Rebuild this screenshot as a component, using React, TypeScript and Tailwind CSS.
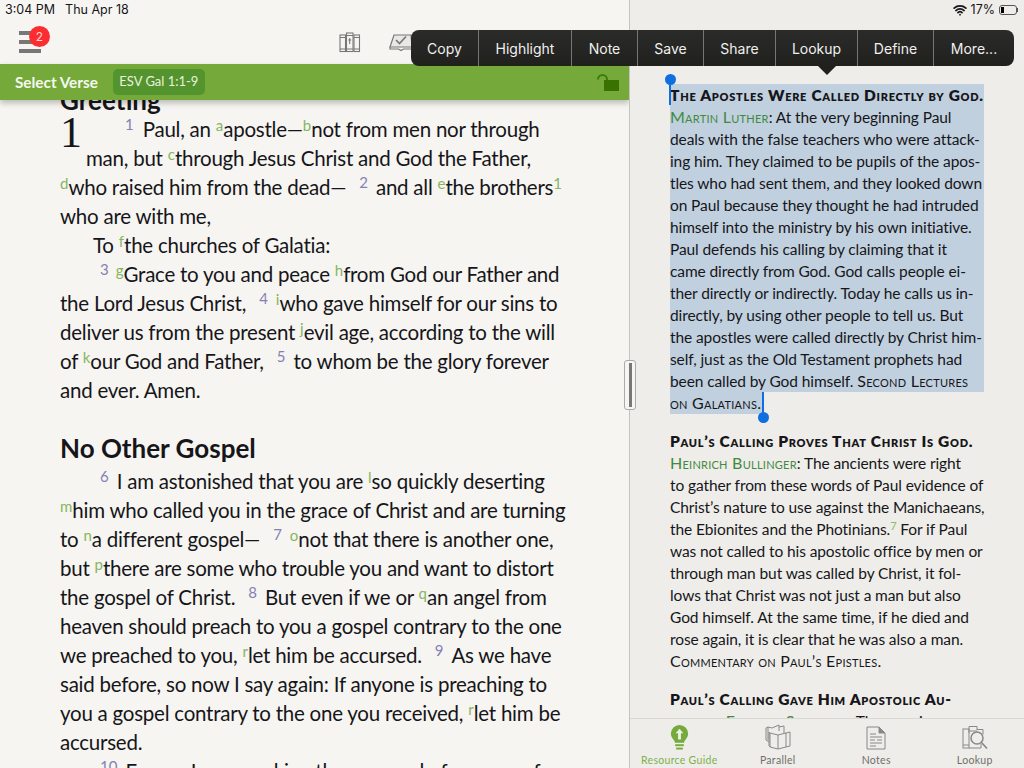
import type { ReactNode } from 'react';
import { Wifi } from 'lucide-react';

const BODY = '[font-family:Lato,sans-serif]';
const UI = '[font-family:Inter,sans-serif]';
const SC = 'text-[16px] tracking-[0.25px] [font-variant:small-caps]';

function V({ n, className = 'ml-[13px] mr-[8px]' }: { n: string; className?: string }) {
  return <span className={`text-[15px] tracking-normal leading-none align-[7px] text-[#8481b5] ${className}`}>{n}</span>;
}

function F({ c }: { c: string }) {
  return <span className="text-[15px] tracking-normal leading-none align-[6px] text-[#86b562]">{c}</span>;
}

function L({ children, className = '' }: { children: ReactNode; className?: string }) {
  return <div className={`whitespace-nowrap ${className}`}>{children}</div>;
}

function Hamburger() {
  return (
    <div className="relative w-[22px] flex flex-col gap-[5px]">
      <div className="h-[4px] bg-[#777]" />
      <div className="h-[4px] bg-[#777]" />
      <div className="h-[4px] bg-[#777]" />
      <div className={`absolute -top-[5px] left-[10px] w-[21px] h-[21px] rounded-full bg-[#fb2d30] text-[#ffd9d9] text-[12px] flex items-center justify-center ${UI}`}>2</div>
    </div>
  );
}

function LibraryIcon() {
  return (
    <svg width="22" height="21" viewBox="0 0 22 21" fill="none" stroke="#777" strokeWidth="1.100">
      <rect x="1" y="3" width="5.500" height="16.500" />
      <rect x="7.500" y="1" width="6.500" height="18.500" />
      <rect x="15" y="3" width="5.500" height="16.500" />
      <path d="M10.700 6v6M9.200 8h3M1 17h5.500M7.500 17h6.500M15 17h5.500M1 5.500h5.500M7.500 3.500h6.500M15 5.500h5.500" />
    </svg>
  );
}

function BookCheckIcon() {
  return (
    <svg width="24" height="20" viewBox="0 0 24 20" fill="#e9e8e4" stroke="#777" strokeWidth="1.200">
      <path d="M5 3h17l1 12H1z" />
      <path d="M1 15v2h8.500l2.500 1.500 2.500-1.500H23v-2" fill="none" />
      <path d="M7 8l3.500 3.500L17 4.500" fill="none" strokeWidth="1.700" />
    </svg>
  );
}

function LockIcon() {
  return (
    <svg width="24" height="19" viewBox="0 0 24 19" fill="none">
      <path d="M2 6.500a4.500 4.500 0 0 1 9 0V8" stroke="#3d7a10" strokeWidth="2" />
      <rect x="8" y="7" width="15" height="11" fill="#3a7200" />
    </svg>
  );
}

function BulbIcon() {
  return (
    <svg width="19" height="25" viewBox="0 0 19 26">
      <path d="M9.500 0a9 9 0 0 1 9 9c0 3.500-2.400 5.400-3.600 7.500-.4.800-.6 1.500-.6 2H4.700c0-.5-.2-1.200-.6-2C2.900 14.400.5 12.500.5 9a9 9 0 0 1 9-9z" fill="#74ab3c" />
      <path d="M9.500 4l4 4.500h-2.500V15H8V8.500H5.500z" fill="#eeede9" />
      <rect x="5" y="20" width="9" height="2" fill="#74ab3c" />
      <rect x="6" y="23.500" width="7" height="2" fill="#74ab3c" />
    </svg>
  );
}

function ParallelIcon() {
  return (
    <svg width="26" height="26" viewBox="0 0 26 26" fill="none" stroke="#888" strokeWidth="1">
      <path d="M3 16V3l4 1 7-3v6M3 3L1 4v12l3 2" />
      <path d="M14 3l5-1v7" />
      <path d="M5 9l8 2 8-2 4-1v14l-4 1-8 2-8-2-1-1V8z" />
      <path d="M13 11v14M5 9v14M21 9v14" />
    </svg>
  );
}

function NotesIcon() {
  return (
    <svg width="20" height="24" viewBox="0 0 20 24" fill="none" stroke="#888" strokeWidth="1">
      <path d="M1 1h12l6 6v16H1z" />
      <path d="M13 1l6 6h-6z" fill="#888" />
      <path d="M4 8h6M4 11h12M4 14h5M11 14h5M4 17h12M4 20h6" />
    </svg>
  );
}

function LookupIcon() {
  return (
    <svg width="26" height="25" viewBox="0 0 26 25" fill="none" stroke="#888" strokeWidth="1">
      <rect x="1" y="4" width="6" height="19" />
      <path d="M7 8V1.500h8V5M15 4.500h6v5M7 23h12v-4M1 20h6M7 6h8" />
      <circle cx="15" cy="13" r="6" strokeWidth="1.500" />
      <path d="M19.500 17.500L25 23.500" strokeWidth="1.700" />
    </svg>
  );
}

const MENU: [string, string][] = [
  ['Copy', 'w-[68px]'],
  ['Highlight', 'w-[93px]'],
  ['Note', 'w-[66px]'],
  ['Save', 'w-[66px]'],
  ['Share', 'w-[72px]'],
  ['Lookup', 'w-[82px]'],
  ['Define', 'w-[76px]'],
  ['More...', 'w-[80px]'],
];

function ActionMenu() {
  return (
    <div className={`absolute left-[411px] top-[30px] z-30 flex h-[36px] rounded-[8px] bg-gradient-to-b from-[#2b2b2a] to-[#20201d] text-[14px] text-[#f0f0ee] ${UI}`}>
      {MENU.map(([label, w], i) => (
        <div key={label} className={`${w} flex items-center justify-center ${i < MENU.length - 1 ? 'border-r border-[#77776f]' : ''}`}>
          {label}
        </div>
      ))}
      <div className="absolute left-[407px] top-[36px] w-0 h-0 border-x-[9px] border-x-transparent border-t-[9px] border-t-[#20201d]" />
    </div>
  );
}

function Tab({ icon, label, active }: { icon: ReactNode; label: string; active?: boolean }) {
  return (
    <div className="flex flex-col items-center justify-end">
      <div className="h-[28px] flex items-end">{icon}</div>
      <div className={`mt-[3px] mb-[1px] text-[10.5px] leading-[14px] tracking-[0.3px] ${active ? 'text-[#7fb04c]' : 'text-[#6f6f6c]'}`}>{label}</div>
    </div>
  );
}

function Green({ children }: { children: ReactNode }) {
  return <span className="text-[#3f8a3f]">{children}</span>;
}

export default function App() {
  return (
    <div className={`relative w-[1024px] h-[768px] overflow-hidden flex ${BODY} text-[#16161a]`}>
      <ActionMenu />

      {/* selection handles */}
      <div className="absolute left-[665px] top-[74px] z-20 w-[11px] h-[11px] rounded-full bg-[#0f6fe0]" />
      <div className="absolute left-[669px] top-[80px] z-20 w-[2px] h-[25px] bg-[#0f6fe0]" />
      <div className="absolute left-[762px] top-[392px] z-20 w-[2px] h-[24px] bg-[#0f6fe0]" />
      <div className="absolute left-[758px] top-[412px] z-20 w-[11px] h-[11px] rounded-full bg-[#0f6fe0]" />

      {/* divider grip */}
      <div className="absolute left-[624px] top-[360px] z-20 w-[12px] h-[50px] rounded-[3px] border border-[#aaa] bg-[#f6f5f1] flex items-center justify-center">
        <div className="w-[3px] h-[44px] bg-[#777]" />
      </div>

      {/* left pane */}
      <div className="w-[630px] h-full shrink-0 bg-[#f6f5f1] border-r border-[#c4c3bf] flex flex-col overflow-hidden">
        <div className={`h-[20px] shrink-0 flex items-center gap-[10px] pl-[5px] text-[12.5px] ${UI}`}>
          <span>3:04 PM</span>
          <span>Thu Apr 18</span>
        </div>
        <div className="h-[44px] shrink-0 flex items-center pl-[19px]">
          <Hamburger />
          <div className="ml-[298px] flex items-center gap-[28px]">
            <LibraryIcon />
            <BookCheckIcon />
          </div>
        </div>
        <div className="relative z-10 h-[36px] shrink-0 bg-[#75aa3a] shadow-[0_3px_6px_rgba(0,0,0,0.25)] flex items-center pl-[15px] pr-[9px] text-white">
          <span className="text-[15.3px] font-bold text-[#f5f8ef]">Select Verse</span>
          <span className="ml-[15px] h-[26px] w-[92px] rounded-[5px] bg-[#53942f] text-[13px] text-[#eaf2dd] flex items-center justify-center">ESV Gal 1:1-9</span>
          <span className="ml-auto"><LockIcon /></span>
        </div>

        <div className="-mt-[14px] pl-[60px] text-[20.5px] tracking-[-0.24px] leading-[29px]">
          <div className="text-[26px] tracking-normal font-bold">Greeting</div>
          <div className="float-left w-[26px] h-[58px] text-[44px] leading-[36px] [font-family:'Liberation_Serif',serif]">1</div>
          <L className="pl-[65px]"><V n="1" className="mr-[9px]" />Paul, an <F c="a" />apostle—<F c="b" />not from men nor through</L>
          <L>man, but <F c="c" />through Jesus Christ and God the Father,</L>
          <L><F c="d" />who raised him from the dead—<V n="2" />and all <F c="e" />the brothers<F c="1" /></L>
          <L>who are with me,</L>
          <L className="pl-[33px]">To <F c="f" />the churches of Galatia:</L>
          <L className="pl-[40px]"><V n="3" className="mr-[7px]" /><F c="g" />Grace to you and peace <F c="h" />from God our Father and</L>
          <L>the Lord Jesus Christ,<V n="4" /><F c="i" />who gave himself for our sins to</L>
          <L>deliver us from the present <F c="j" />evil age, according to the will</L>
          <L>of <F c="k" />our God and Father,<V n="5" />to whom be the glory forever</L>
          <L>and ever. Amen.</L>
          <div className="mt-[29px] text-[26px] tracking-normal font-bold">No Other Gospel</div>
          <L className="mt-[4px] pl-[40px]"><V n="6" className="mr-[8px]" />I am astonished that you are <F c="l" />so quickly deserting</L>
          <L><F c="m" />him who called you in the grace of Christ and are turning</L>
          <L>to <F c="n" />a different gospel—<V n="7" /><F c="o" />not that there is another one,</L>
          <L>but <F c="p" />there are some who trouble you and want to distort</L>
          <L>the gospel of Christ.<V n="8" />But even if we or <F c="q" />an angel from</L>
          <L>heaven should preach to you a gospel contrary to the one</L>
          <L>we preached to you, <F c="r" />let him be accursed.<V n="9" />As we have</L>
          <L>said before, so now I say again: If anyone is preaching to</L>
          <L>you a gospel contrary to the one you received, <F c="r" />let him be</L>
          <L>accursed.</L>
          <L className="pl-[40px]"><V n="10" className="mr-[8px]" />For am I now seeking the approval of man, or of</L>
        </div>
      </div>

      {/* right pane */}
      <div className="flex-1 min-w-0 h-full bg-[#eeede9] flex flex-col">
        <div className={`h-[20px] shrink-0 flex items-center justify-end gap-[4px] pr-[6px] text-[12.5px] ${UI}`}>
          <Wifi size={14} strokeWidth={3} />
          <span>17%</span>
          <div className="flex items-center">
            <div className="w-[18px] h-[10px] rounded-[3px] border border-[#555] p-px">
              <div className="w-[3px] h-full bg-black" />
            </div>
            <div className="w-px h-[4px] bg-[#555]" />
          </div>
        </div>
        <div className="flex-1 min-h-0 overflow-hidden pt-[64px] pl-[40px] text-[15.5px] tracking-[-0.1px] leading-[22px]">
          <div className="w-[314px] bg-[#c1d0de]">
            <L className="font-extrabold tracking-[0.7px] [font-variant:small-caps]">The Apostles Were Called Directly by God.</L>
            <L><span className={SC}><Green>Martin Luther</Green></span>: At the very beginning Paul</L>
            <L>deals with the false teachers who were attack-</L>
            <L>ing him. They claimed to be pupils of the apos-</L>
            <L>tles who had sent them, and they looked down</L>
            <L>on Paul because they thought he had intruded</L>
            <L>himself into the ministry by his own initiative.</L>
            <L>Paul defends his calling by claiming that it</L>
            <L>came directly from God. God calls people ei-</L>
            <L>ther directly or indirectly. Today he calls us in-</L>
            <L>directly, by using other people to tell us. But</L>
            <L>the apostles were called directly by Christ him-</L>
            <L>self, just as the Old Testament prophets had</L>
            <L>been called by God himself. <span className={SC}>Second Lectures</span></L>
          </div>
          <div className={`w-[93px] bg-[#c1d0de] whitespace-nowrap ${SC}`}>on Galatians.</div>

          <div className="mt-[16px]">
            <L className="font-extrabold tracking-[0.7px] [font-variant:small-caps]">Paul’s Calling Proves That Christ Is God.</L>
            <L><span className={SC}><Green>Heinrich Bullinger</Green></span>: The ancients were right</L>
            <L>to gather from these words of Paul evidence of</L>
            <L>Christ’s nature to use against the Manichaeans,</L>
            <L>the Ebionites and the Photinians.<span className="text-[11px] leading-none align-[5px] text-[#8fbb6c]">7</span> For if Paul</L>
            <L>was not called to his apostolic office by men or</L>
            <L>through man but was called by Christ, it fol-</L>
            <L>lows that Christ was not just a man but also</L>
            <L>God himself. At the same time, if he died and</L>
            <L>rose again, it is clear that he was also a man.</L>
            <L className={SC}>Commentary on Paul’s Epistles.</L>
          </div>

          <div className="mt-[16px]">
            <L className="font-extrabold tracking-[0.7px] [font-variant:small-caps]">Paul’s Calling Gave Him Apostolic Au-</L>
            <L><span className="font-extrabold [font-variant:small-caps]">thority.</span> <span className={SC}><Green>Erasmus Sarcerius</Green></span>: The opening</L>
          </div>
        </div>
        <div className="h-[50px] shrink-0 border-t border-[#d9d8d4] bg-[#eeede9] grid grid-cols-4">
          <Tab icon={<BulbIcon />} label="Resource Guide" active />
          <Tab icon={<ParallelIcon />} label="Parallel" />
          <Tab icon={<NotesIcon />} label="Notes" />
          <Tab icon={<LookupIcon />} label="Lookup" />
        </div>
      </div>
    </div>
  );
}
